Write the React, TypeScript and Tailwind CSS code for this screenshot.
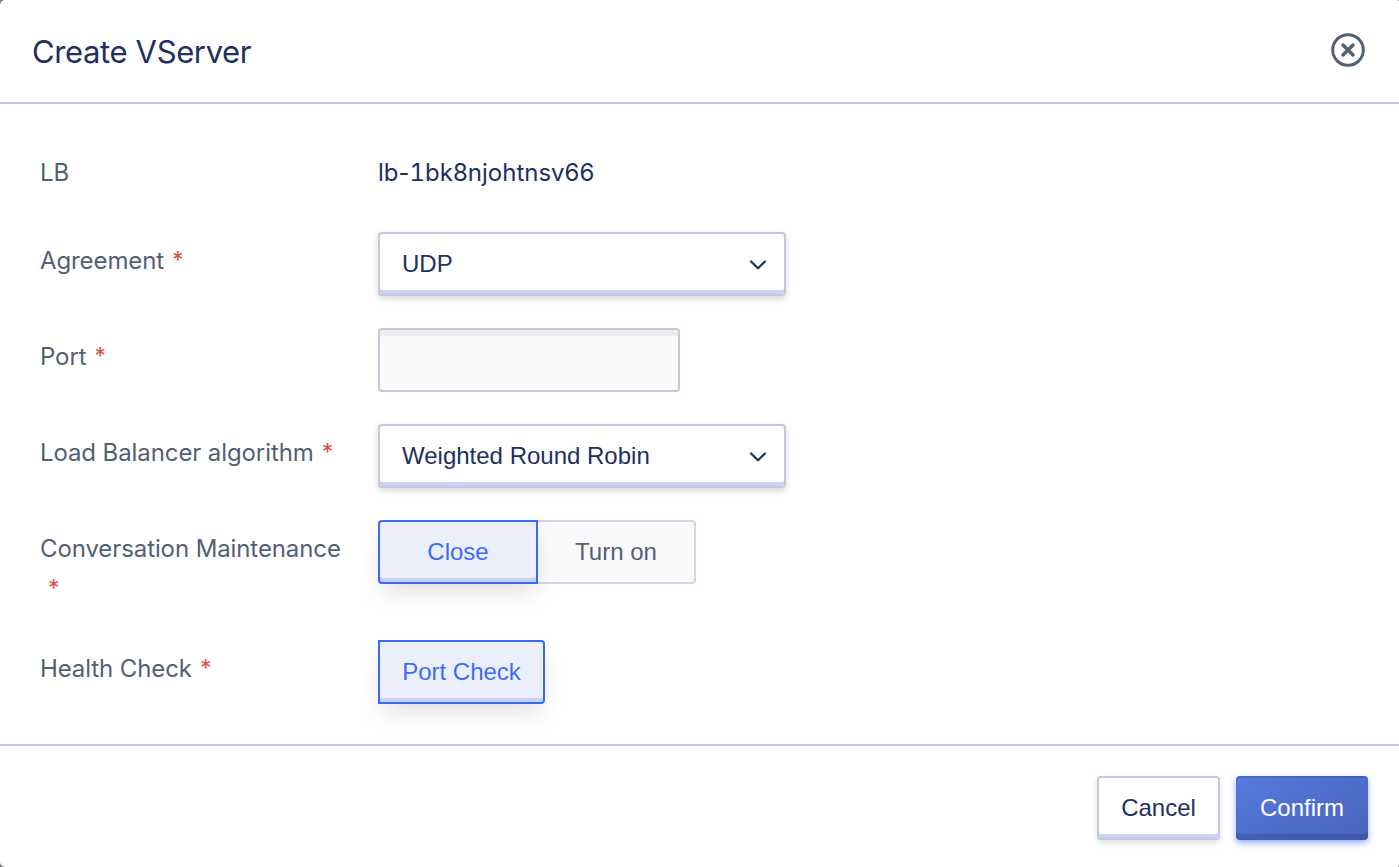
import type { ReactNode } from "react";

function Label({ children, required = true }: { children: ReactNode; required?: boolean }) {
  return (
    <div className="w-[338px] shrink-0 pr-[34px] pt-[9px] text-[24px] leading-[40px] tracking-[-0.1px] text-[#526075]">
      <span className="whitespace-nowrap">{children}</span>
      {required && (
        <span className="-mt-px mb-px ml-[8px] inline-block align-top text-[23px] leading-[40px] text-[#e1503f]">*</span>
      )}
    </div>
  );
}

function Select({ value }: { value: string }) {
  return (
    <button className="flex h-16 w-[408px] items-center justify-between rounded-[4px] border-2 border-[#c3c9da] bg-white pl-[22px] pr-[17px] text-left font-['Liberation_Sans',Arial,sans-serif] text-[24px] leading-[32px] text-[#20305f] shadow-[inset_0_-4px_0_0_#c4d3f7,0_3px_6px_0_rgba(0,0,0,0.16)]">
      <span>{value}</span>
      <svg width="18" height="12" viewBox="0 0 18 12" fill="none" className="mt-[2px]">
        <path d="M2 2.5 9 9.2 16 2.5" stroke="#20305f" strokeWidth="2.2" strokeLinecap="round" strokeLinejoin="miter" />
      </svg>
    </button>
  );
}

export default function App() {
  return (
    <div className="h-[867px] w-[1399px] bg-[#777]">
      <div className="flex h-full flex-col overflow-hidden rounded-l-[5px] rounded-r-[2px] bg-white font-[Inter,sans-serif] text-[#20305f]">
        <header className="flex h-[104px] shrink-0 items-center justify-between border-b-2 border-[#c3c4da] pl-[32px] pr-[34px]">
          <h1 className="pt-[2px] text-[31px] leading-[40px] tracking-[-0.37px]">Create VServer</h1>
          <svg width="34" height="34" viewBox="0 0 34 34" fill="none" stroke="#526075" className="mb-[2px]">
            <circle cx="17" cy="17" r="15.3" strokeWidth="3" />
            <path d="m12 12 10 10M22 12 12 22" strokeWidth="3.5" strokeLinecap="round" />
          </svg>
        </header>

        <main className="flex h-[640px] shrink-0 flex-col pl-[40px] pt-[40px]">
          <div className="mb-[24px] flex h-16">
            <Label required={false}>LB</Label>
            <div className="pt-[9px] text-[24px] leading-[40px]">
              lb-<span className="tabular-nums">1</span>bk8njohtnsv66
            </div>
          </div>
          <div className="mb-8 flex h-16">
            <Label>Agreement</Label>
            <Select value="UDP" />
          </div>
          <div className="mb-8 flex h-16">
            <Label>Port</Label>
            <input className="h-16 w-[302px] rounded-[4px] border-2 border-[#c3c9da] bg-[#fafafc] px-[22px] text-[24px] shadow-[inset_0_6px_0_0_#ececee] outline-none" />
          </div>
          <div className="mb-8 flex h-16">
            <Label>Load Balancer algorithm</Label>
            <Select value="Weighted Round Robin" />
          </div>
          <div className="mb-8 flex h-[88px] items-start">
            <Label>Conversation Maintenance</Label>
            <div className="flex font-['Liberation_Sans',Arial,sans-serif] text-[24px] leading-[32px]">
              <button className="z-10 h-16 w-40 rounded-l-[4px] border-2 border-[#3a69f6] bg-[#ebeffc] text-[#3f6cf5] shadow-[inset_0_-4px_0_0_#c4d3f7,0_12px_24px_-4px_rgba(0,0,0,0.13)]">
                Close
              </button>
              <button className="h-16 w-[158px] rounded-r-[4px] border-2 border-l-0 border-[#d3d5e7] bg-[#fafafc] text-[#526075]">
                Turn on
              </button>
            </div>
          </div>
          <div className="flex h-16">
            <Label>Health Check</Label>
            <button className="h-16 w-[167px] rounded-r-[4px] border-2 border-[#3a69f6] bg-[#ebeffc] font-['Liberation_Sans',Arial,sans-serif] text-[24px] leading-[32px] text-[#3f6cf5] shadow-[inset_0_-4px_0_0_#c4d3f7,0_12px_24px_-4px_rgba(0,0,0,0.13)]">
              Port Check
            </button>
          </div>
        </main>

        <footer className="flex flex-1 justify-end gap-4 border-t-2 border-[#c3c9da] pr-[31px] pt-[30px] font-['Liberation_Sans',Arial,sans-serif] text-[24px] leading-[32px]">
          <button className="h-16 w-[123px] rounded-[4px] border-2 border-[#c3c9da] bg-white shadow-[inset_0_-4px_0_0_#c4d3f7,0_3px_6px_0_rgba(0,0,0,0.13)]">
            Cancel
          </button>
          <button className="h-16 w-[132px] rounded-[4px] bg-linear-to-br from-[#567ae0] to-[#4864ba] text-white shadow-[inset_0_2px_0_0_rgba(30,50,120,0.25),inset_0_-6px_0_0_rgba(40,60,120,0.3),0_3px_6px_0_rgba(62,105,246,0.55)]">
            Confirm
          </button>
        </footer>
      </div>
    </div>
  );
}
